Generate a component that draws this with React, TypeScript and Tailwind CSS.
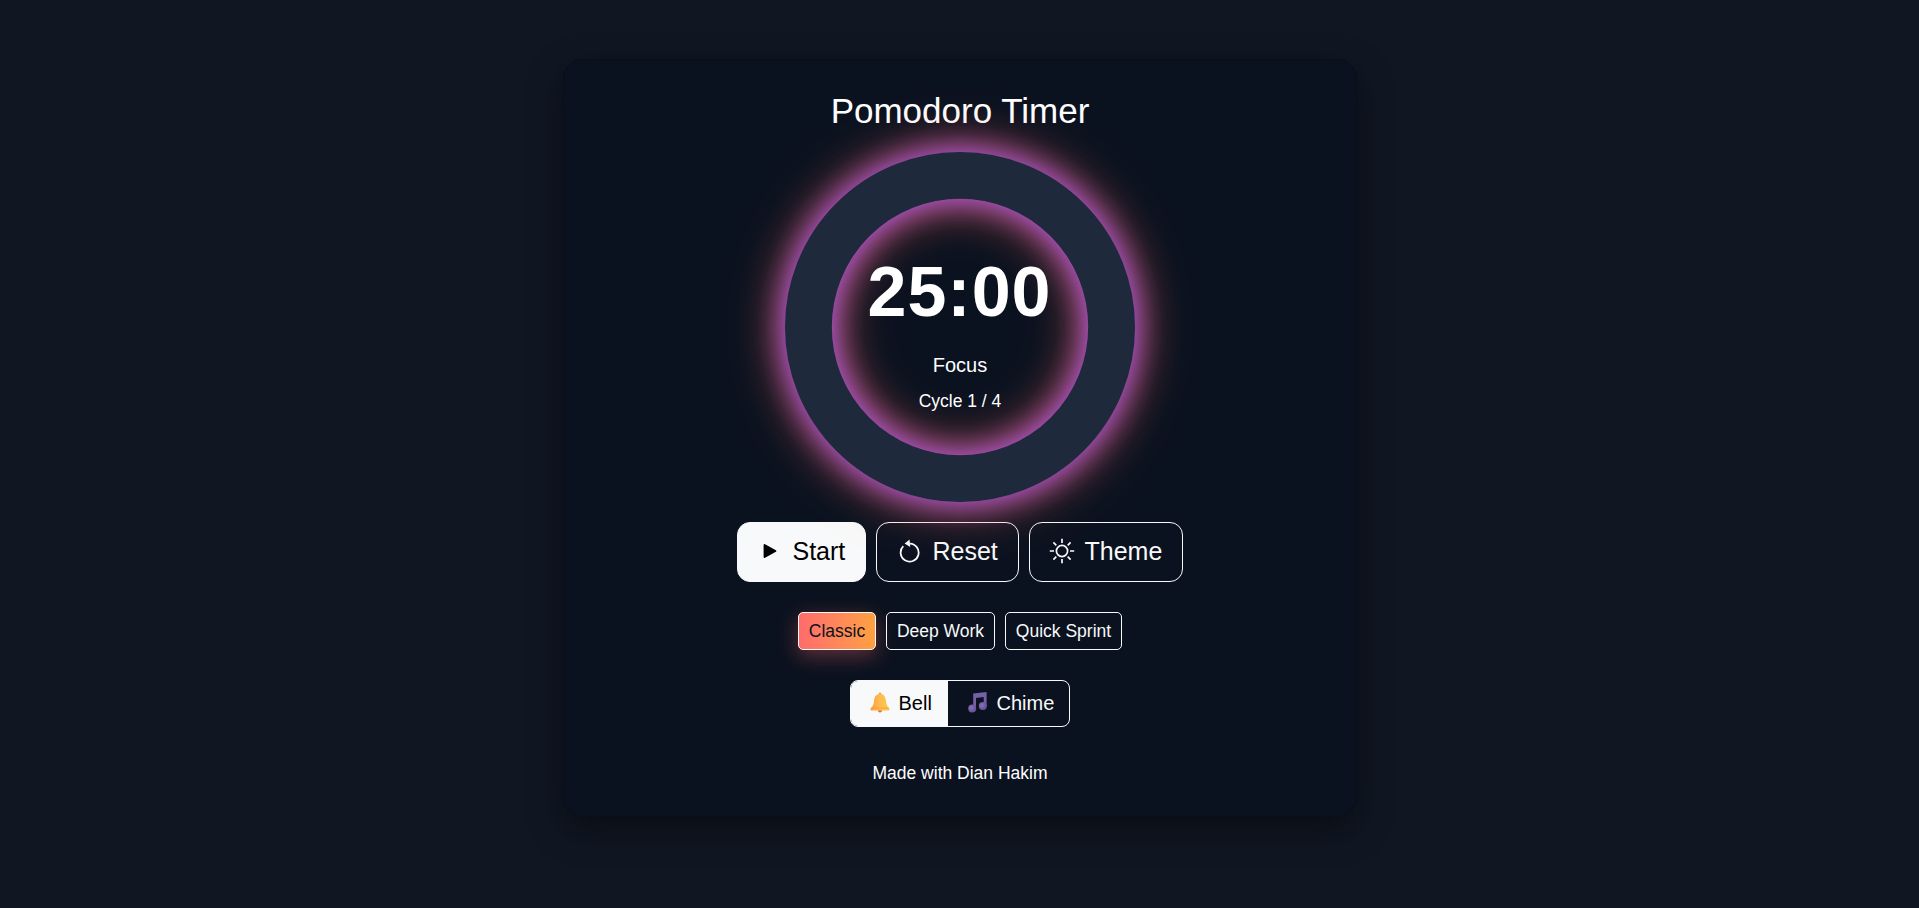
import type { ReactNode } from "react";

function PlayIcon() {
  return (
    <svg width="16" height="16" viewBox="0 0 16 16" className="shrink-0">
      <path d="M2.600 2v12L13.400 8z" fill="#000" stroke="#000" strokeWidth="2" strokeLinejoin="round" />
    </svg>
  );
}

function ResetIcon() {
  return (
    <svg width="22" height="24" viewBox="0 0 22 24" className="mb-px shrink-0" fill="none" stroke="currentColor">
      <path d="M4.300 7.200A9 9 0 1 0 11 4.600" strokeWidth="1.800" />
      <path d="M10.600 0.400L5.600 4.400L11.200 8z" fill="currentColor" stroke="none" />
    </svg>
  );
}

function SunIcon() {
  return (
    <svg width="26" height="26" viewBox="0 0 26 26" className="mb-px shrink-0" fill="none" stroke="currentColor" strokeWidth="1.700">
      <circle cx="13" cy="13" r="5.600" />
      <path d="M13 .8v4.200M13 21v4.200M.8 13H5M21 13h4.200M4.400 4.400l2.900 2.900M18.700 18.700l2.900 2.900M4.400 21.600l2.900-2.900M18.700 7.300l2.900-2.900" />
    </svg>
  );
}

function BellIcon() {
  return (
    <svg width="20" height="21" viewBox="0 0 20 21" className="shrink-0">
      <defs>
        <linearGradient id="bell" x1="0" x2="1">
          <stop offset="0" stopColor="#ff9b45" />
          <stop offset=".5" stopColor="#fdbc4d" />
          <stop offset="1" stopColor="#fdc84c" />
        </linearGradient>
      </defs>
      <circle cx="10" cy="18.600" r="2" fill="#e8703a" />
      <circle cx="10" cy="2" r="1.500" fill="#f6a442" />
      <path d="M10 2C6 2 4.400 4.800 4 9c-.3 3.500-1 5-2.800 6.800C0 17 .3 18.600 1.600 18.600h16.800c1.300 0 1.600-1.600.4-2.800C17 14 16.300 12.500 16 9c-.4-4.200-2-7-6-7z" fill="url(#bell)" />
      <path d="M1.200 16.200h17.600" stroke="#f39a3c" strokeWidth=".8" />
    </svg>
  );
}

function NotesIcon() {
  return (
    <svg width="19" height="21" viewBox="0 0 19 21" className="shrink-0">
      <defs>
        <radialGradient id="note" cx=".4" cy=".4">
          <stop offset="0" stopColor="#8a72bd" />
          <stop offset="1" stopColor="#67549a" />
        </radialGradient>
      </defs>
      <path d="M5.200 1.500L18.600 0v14.500h-2.900V5L8 6v11H5.200z" fill="#7560a8" />
      <circle cx="4.200" cy="16.500" r="4" fill="url(#note)" />
      <circle cx="14.800" cy="14" r="4" fill="url(#note)" />
    </svg>
  );
}

function ActionButton({ className, children }: { className: string; children: ReactNode }) {
  return (
    <button className={`flex h-[60px] items-center rounded-[13px] border border-[#f8f9fa] pb-[2px] text-[25px] leading-none ${className}`}>
      {children}
    </button>
  );
}

function PresetButton({ className, children }: { className: string; children: ReactNode }) {
  return (
    <button className={`flex h-[38px] items-center justify-center rounded-[5px] border border-[#f8f9fa] pt-px pl-px text-[17.5px] leading-none ${className}`}>
      {children}
    </button>
  );
}

function TimerRing() {
  return (
    <div className="relative mt-[20px] size-[350px]">
      <svg
        width="350"
        height="350"
        viewBox="0 0 350 350"
        className="overflow-visible [filter:drop-shadow(0_0_14px_rgba(168,85,247,0.95))_drop-shadow(0_0_22px_rgba(255,107,107,0.8))]"
      >
        <circle cx="175" cy="175" r="151.600" fill="none" stroke="#1e293b" strokeWidth="46.800" />
      </svg>
      <div className="absolute inset-0 flex flex-col items-center text-white">
        <div className="mt-[104px] text-[70px] leading-[72px] font-bold tracking-[1px]">25:00</div>
        <div className="mt-[25px] pl-px text-[20px] leading-[24px]">Focus</div>
        <div className="mt-[13px] pl-px text-[17.5px] leading-[22px]">Cycle 1 / 4</div>
      </div>
    </div>
  );
}

export default function App() {
  return (
    <div className="flex h-[908px] items-start justify-center bg-[#101723] pt-[59px] font-['Liberation_Sans',Arial,sans-serif] text-[#f8f9fa]">
      <main className="flex h-[758px] w-[794px] flex-col items-center rounded-[20px] border border-[#090f19] bg-[#0b121f] pt-[30px] shadow-[0_12px_36px_rgba(0,0,0,0.45)]">
        <h1 className="pl-px text-[35px] leading-[42px] text-white">Pomodoro Timer</h1>
        <TimerRing />
        <div className="mt-5 flex gap-[10px]">
          <ActionButton className="w-[129px] gap-[15px] bg-[#f8f9fa] pl-[24px] text-black">
            <PlayIcon />
            Start
          </ActionButton>
          <ActionButton className="w-[143px] gap-[12px] pl-[22px]">
            <ResetIcon />
            Reset
          </ActionButton>
          <ActionButton className="w-[154px] gap-[10px] pl-[19px]">
            <SunIcon />
            Theme
          </ActionButton>
        </div>
        <div className="mt-[30px] flex gap-[10px]">
          <PresetButton className="w-[78px] bg-gradient-to-r from-[#ff6b6b] to-[#ffa040] text-[#0b121e] shadow-[0_6px_20px_rgba(255,107,107,0.35)]">
            Classic
          </PresetButton>
          <PresetButton className="w-[109px]">Deep Work</PresetButton>
          <PresetButton className="w-[117px]">Quick Sprint</PresetButton>
        </div>
        <div className="mt-[30px] flex h-[47px] w-[220px] overflow-hidden rounded-[8px] border border-[#f8f9fa] text-[20px] leading-none">
          <button className="flex w-[97px] items-center gap-[9px] bg-[#f8f9fa] pb-[2px] pl-[19px] text-black">
            <BellIcon />
            Bell
          </button>
          <button className="flex flex-1 items-center gap-[10px] pb-[2px] pl-[20px]">
            <NotesIcon />
            Chime
          </button>
        </div>
        <footer className="mt-[35px] pl-px text-[17.5px] leading-[22px] text-white">Made with Dian Hakim</footer>
      </main>
    </div>
  );
}
